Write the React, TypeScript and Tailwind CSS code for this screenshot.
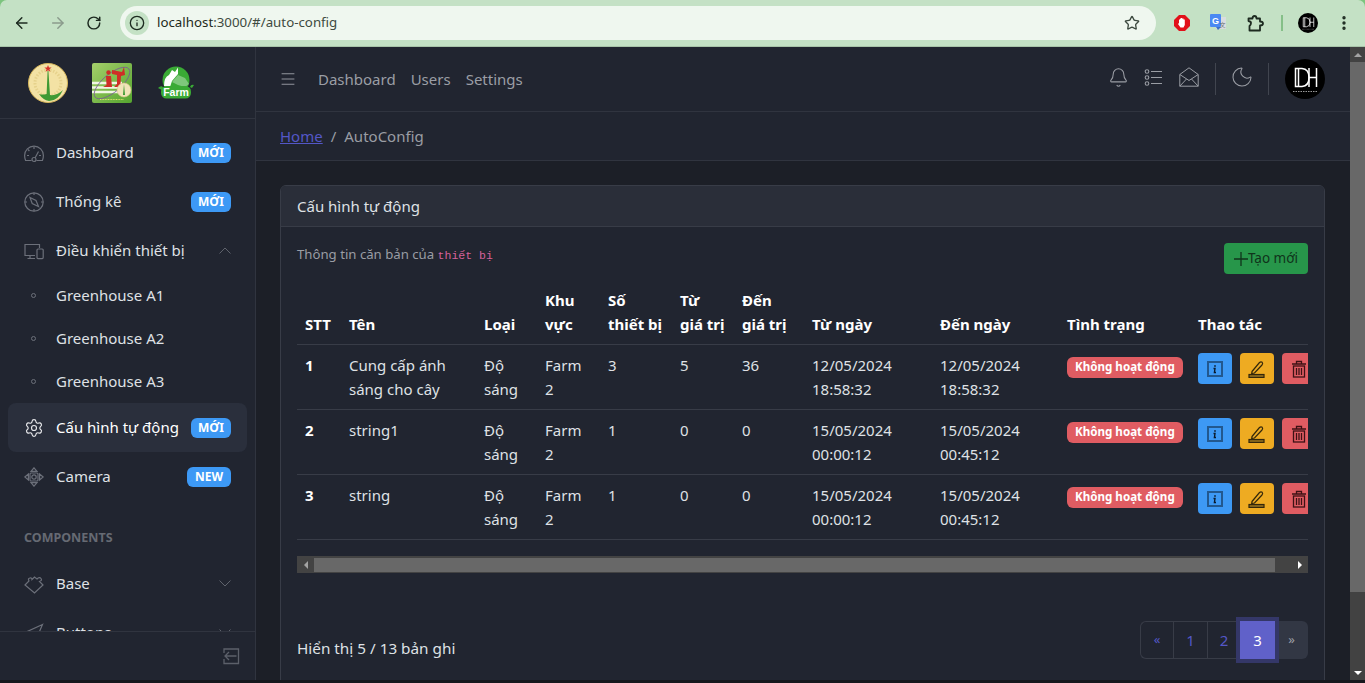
import { Bell, Menu, Moon, Settings, Info, ArrowLeft, ArrowRight, RotateCw, Star, MoreVertical } from 'lucide-react'

const rows = [
  { id: 1, name: ['Cung cấp ánh', 'sáng cho cây'], devices: 3, from: 5, to: 36, start: ['12/05/2024', '18:58:32'], end: ['12/05/2024', '18:58:32'] },
  { id: 2, name: ['string1'], devices: 1, from: 0, to: 0, start: ['15/05/2024', '00:00:12'], end: ['15/05/2024', '00:45:12'] },
  { id: 3, name: ['string'], devices: 1, from: 0, to: 0, start: ['15/05/2024', '00:00:12'], end: ['15/05/2024', '00:45:12'] },
]

const GaugeIcon = () => (
  <svg width="20" height="20" viewBox="0 0 20 20" fill="none" stroke="currentColor" strokeWidth="1.2">
    <path d="M7.5 17.5 H1.6 Q.6 15 .6 12.5 A9.4 9.4 0 0 1 19.4 12.5 Q19.4 15 18.4 17.5 H12.5" />
    <circle cx="10" cy="16.5" r="2" />
    <path d="M11 15 L14.5 8.5 M10 4 V6 M4 6.5 L5.4 8 M3 12.5 H5 M15 12.5 H17" />
  </svg>
)

const CompassIcon = () => (
  <svg width="20" height="20" viewBox="0 0 20 20" fill="none" stroke="currentColor" strokeWidth="1.2">
    <circle cx="10" cy="10" r="9.2" />
    <path d="M6 5.5 L12 8.5 L14.5 14.5 L8.2 11.5 Z M10 .8 V3 M10 17 V19.2 M.8 10 H3 M17 10 H19.2" />
  </svg>
)

const DevicesIcon = () => (
  <svg width="20" height="20" viewBox="0 0 20 20" fill="none" stroke="currentColor" strokeWidth="1.2">
    <path d="M11 14.5 H1 V3.5 H15.5 V7" />
    <path d="M6 14.5 V17.5 M3.5 17.5 H11" />
    <rect x="13" y="8" width="6.2" height="9.6" rx="1" />
  </svg>
)

const CameraControlIcon = () => (
  <svg width="20" height="20" viewBox="0 0 20 20" fill="none" stroke="currentColor" strokeWidth="1.2">
    <path d="M10 .8 L13 4.4 H7 Z M10 19.2 L13 15.6 H7 Z M.8 10 L4.4 7 V13 Z M19.2 10 L15.6 7 V13 Z" />
    <rect x="6" y="6" width="8" height="8" rx="1" />
    <circle cx="10" cy="10" r="2.2" />
  </svg>
)

const BaseIcon = () => (
  <svg width="20" height="20" viewBox="0 0 20 20" fill="none" stroke="currentColor" strokeWidth="1.2">
    <path d="M1 11 L5 7 Q3.5 4.5 6 4 Q8 3.6 8 5.5 L10.5 3 L13 5 Q15.5 2.5 17 4.5 Q18.5 6.5 15.5 7.5 L19 11 L10.5 19 Z" />
  </svg>
)

const CursorIcon = () => (
  <svg width="20" height="20" viewBox="0 0 20 20" fill="none" stroke="currentColor" strokeWidth="1.2">
    <path d="M18.5 1.5 L1 9.5 L9.5 11 L11 19 Z" />
  </svg>
)

const Chevron = ({ up }: { up?: boolean }) => (
  <svg className="ml-auto text-[#5f636c]" width="12" height="7" viewBox="0 0 12 7" fill="none" stroke="currentColor" strokeWidth="1">
    <path d={up ? 'M.5 6.5 L6 1 L11.5 6.5' : 'M.5 .5 L6 6 L11.5 .5'} />
  </svg>
)

function DhMark({ size }: { size: number }) {
  return (
    <svg width={size} height={size} viewBox="0 0 40 40">
      <circle cx="20" cy="20" r="20" fill="#000" />
      <g fill="none" stroke="#fff" strokeWidth="1.5">
        <path d="M10.5 9.5 H17 Q24 10 24 18.5 Q24 27 17 27.5 H10.5 Z M13.5 9.5 V27.5" />
        <path d="M24 18.5 H31.5 M31.5 9 V28 M24 9 V28" />
      </g>
      <path d="M8 32.5 H33" stroke="#999" strokeWidth="1" strokeDasharray="1.5 1" />
    </svg>
  )
}

function Badge({ text }: { text: string }) {
  return (
    <span className={`ml-auto bg-[#3d99f5] text-white text-[12px] font-bold rounded-md h-5 flex items-center justify-center ${text === 'NEW' ? 'w-11' : 'w-10'}`}>
      {text}
    </span>
  )
}

function NavItem({ icon, label, badge, chevron, active }: { icon: React.ReactNode; label: string; badge?: string; chevron?: 'up' | 'down'; active?: boolean }) {
  return (
    <div className={`h-[49px] mx-2 pl-4 pr-4 flex items-center rounded-lg ${active ? 'bg-[#2a2f3c] text-white' : 'text-[#dfe1e5]'}`}>
      <span className={`w-8 shrink-0 flex ${active ? 'text-[#e6e7ea]' : 'text-[#6c707a]'}`}>{icon}</span>
      <span className="text-[15px]">{label}</span>
      {badge && <Badge text={badge} />}
      {chevron === 'up' && <Chevron up />}
      {chevron === 'down' && <Chevron />}
    </div>
  )
}

function SubItem({ label }: { label: string }) {
  return (
    <div className="h-[43px] mx-2 pl-4 flex items-center text-[#dfe1e5]">
      <span className="w-8 flex pl-[7px]"><span className="w-[5px] h-[5px] rounded-full border border-[#6c707a]" /></span>
      <span className="text-[15px]">{label}</span>
    </div>
  )
}

function Logos() {
  return (
    <div className="h-[72px] shrink-0 border-b border-[#30343f] flex items-center pl-[28px]">
      {/* school seal */}
      <svg width="40" height="40" viewBox="0 0 40 40">
        <circle cx="20" cy="20" r="19.5" fill="#f3e2a4" stroke="#d9b85c" strokeWidth="1" />
        <circle cx="20" cy="20" r="13" fill="none" stroke="#e6d28c" strokeWidth="3" strokeDasharray="1.5 1.5" />
        <path d="M19.6 8 L18.6 31 Q14 32 11 31 Q15 37 21 38 Q30 38 35 27 Q29 33 22 32 L20.4 8 Z" fill="#3f9a34" />
        <path d="M20 2 L21 4.6 L23.6 4.6 L21.5 6.2 L22.3 8.8 L20 7.2 L17.7 8.8 L18.5 6.2 L16.4 4.6 L19 4.6 Z" fill="#d9352a" />
      </svg>
      {/* IT department logo */}
      <svg className="ml-[24px]" width="40" height="40" viewBox="0 0 40 40">
        <defs>
          <linearGradient id="itBg" x1="0" y1="0" x2="1" y2="1">
            <stop offset="0" stopColor="#a5cf6a" />
            <stop offset="1" stopColor="#55a52f" />
          </linearGradient>
        </defs>
        <rect width="40" height="40" rx="2" fill="url(#itBg)" />
        <path d="M0 20 H30 M0 24.5 H28 M0 29 H28" stroke="#f1f7e4" strokeWidth="2.5" />
        <ellipse cx="20" cy="20" rx="22" ry="9" transform="rotate(-40 20 20)" fill="none" stroke="#7a5a96" strokeWidth=".8" />
        <circle cx="16.5" cy="9.5" r="2.2" fill="#cf2d26" />
        <path d="M14 13 H19 L20 24 H11 L14.5 22 Z" fill="#cf2d26" />
        <path d="M20 7 L30 9 L32 4 L33 12 L29 13 L28.5 21 L32 24 H22 L25 21 L25 12 L20 11 Z" fill="#cf2d26" />
        <circle cx="32" cy="27" r="7" fill="#f1e4b8" stroke="#d8c68a" strokeWidth=".6" />
        <path d="M32 21 L31 32 L33 32 Z" fill="#3f9a34" />
        <path d="M8 36.5 H32" stroke="#d8e36a" strokeWidth="1" strokeDasharray="1 .6" />
      </svg>
      {/* farm logo */}
      <svg className="ml-[26px]" width="36" height="33" viewBox="0 0 36 33">
        <circle cx="18" cy="14" r="13.5" fill="#3aaa35" />
        <path d="M6 20 Q6 11 11 9 L14 4 L17 6 L20 1.5 L20 8 L14 15 L12 21 Z" fill="#fff" />
        <path d="M14 16 L20 9 L27 12 L31 18 L27 21 L20 19 Z" fill="#fff" opacity=".35" />
        <path d="M0 22 Q3 19 5 21 L4 24 Z M36 19 Q33 18 32 21 L34 22 Z" fill="#3aaa35" />
        <rect x="3" y="20" width="30" height="12.5" rx="5.5" fill="#3aaa35" />
        <text x="18" y="30" textAnchor="middle" fill="#fff" fontSize="10.5" fontWeight="700" fontFamily="Liberation Sans, sans-serif">Farm</text>
      </svg>
    </div>
  )
}

function Sidebar() {
  return (
    <aside className="w-[256px] shrink-0 border-r border-[#30343f] bg-[#212530] flex flex-col">
      <Logos />
      <nav className="flex-1 overflow-hidden pt-[9px]">
        <NavItem icon={<GaugeIcon />} label="Dashboard" badge="MỚI" />
        <NavItem icon={<CompassIcon />} label="Thống kê" badge="MỚI" />
        <NavItem icon={<DevicesIcon />} label="Điều khiển thiết bị" chevron="up" />
        <div className="-mt-px">
          <SubItem label="Greenhouse A1" />
          <SubItem label="Greenhouse A2" />
          <SubItem label="Greenhouse A3" />
        </div>
        <NavItem icon={<Settings className="w-5 h-5" strokeWidth={1.4} />} label="Cấu hình tự động" badge="MỚI" active />
        <NavItem icon={<CameraControlIcon />} label="Camera" badge="NEW" />
        <div className="pl-6 mt-[25px] mb-[9px] text-[12.5px] font-bold text-[#666a73] h-[24px] flex items-center">COMPONENTS</div>
        <NavItem icon={<BaseIcon />} label="Base" chevron="down" />
        <NavItem icon={<CursorIcon />} label="Buttons" chevron="down" />
      </nav>
      <div className="h-[49px] shrink-0 border-t border-[#30343f] flex items-center justify-end pr-[15px] bg-[#212530]">
        <svg width="18" height="18" viewBox="0 0 18 18" fill="none" stroke="#5c606a" strokeWidth="1.3">
          <path d="M2 6 V2 H16.5 V16.5 H2 V12" />
          <path d="M14.5 9 H3 M7 5 L3 9 L7 13" />
        </svg>
      </div>
    </aside>
  )
}

function Header() {
  return (
    <header className="h-[65px] shrink-0 border-b border-[#30343f] flex items-center pl-[23px] pr-[25px]">
      <Menu className="w-[18px] h-[18px] text-[#9a9da4] mr-[21px]" strokeWidth={1.25} />
      <div className="flex gap-[15px] text-[15px] text-[#9b9ea5]">
        <span>Dashboard</span>
        <span>Users</span>
        <span>Settings</span>
      </div>
      <div className="ml-auto flex items-center text-[#9a9da4]">
        <Bell className="w-[21px] h-[21px] -mt-1" strokeWidth={1.2} />
        <svg className="ml-[15px] -mt-1" width="19" height="19" viewBox="0 0 19 19" fill="none" stroke="currentColor" strokeWidth="1.1">
          <circle cx="3" cy="3.5" r="1.8" /><circle cx="3" cy="9.5" r="1.8" /><circle cx="3" cy="15.5" r="1.8" />
          <path d="M7 3.5 H18 M7 9.5 H18 M7 15.5 H18" />
        </svg>
        <svg className="ml-[16px] -mt-1" width="20" height="20" viewBox="0 0 20 20" fill="none" stroke="currentColor" strokeWidth="1">
          <path d="M.8 7.5 L10 .8 L19.2 7.5 V19.2 H.8 Z M.8 7.5 L10 13.5 L19.2 7.5 M.8 19.2 L7.5 12 M19.2 19.2 L12.5 12" />
        </svg>
        <span className="w-px h-8 bg-[#41454f] ml-4 mr-4" />
        <Moon className="w-6 h-6 -mx-0.5 -mt-1" strokeWidth={1.05} />
        <span className="w-px h-8 bg-[#41454f] ml-4 mr-4" />
        <DhMark size={40} />
      </div>
    </header>
  )
}

function Th({ children, className = '' }: { children: React.ReactNode; className?: string }) {
  return <th className={`px-2 pb-2 pt-0 align-bottom text-left font-bold text-[15px] leading-[24px] text-white ${className}`}>{children}</th>
}

function Td({ children, className = '' }: { children: React.ReactNode; className?: string }) {
  return <td className={`px-2 py-2 align-top text-[15px] leading-[24px] text-[#dfe1e5] ${className}`}>{children}</td>
}

function Stack({ lines }: { lines: string[] }) {
  return <>{lines.map((line) => <div key={line}>{line}</div>)}</>
}

function RowActions() {
  return (
    <div className="flex gap-2">
      <span className="w-[34px] h-[31px] shrink-0 rounded bg-[#3d99f5] flex items-center justify-center">
        <svg width="16" height="16" viewBox="0 0 16 16" fill="none">
          <rect x="1" y="1" width="14" height="14" stroke="#22588f" strokeWidth="2" />
          <path d="M7.2 5 H8.8 M6.5 7.5 H8 L7.4 11.5 H9" stroke="#0b1a2b" strokeWidth="1.4" />
        </svg>
      </span>
      <span className="w-[34px] h-[31px] shrink-0 rounded bg-[#eeab22] flex items-center justify-center">
        <svg width="18" height="18" viewBox="0 0 18 18" fill="none" stroke="#33270b" strokeWidth="1.2">
          <path d="M4 11.5 L11.5 2.5 Q13 1.2 14.2 2.3 Q15.2 3.5 14 5 L6.5 13 L3.7 13.5 Z" />
          <rect x="1" y="14.5" width="15" height="3" fill="#8a6a1c" />
        </svg>
      </span>
      <span className="w-[34px] h-[31px] shrink-0 rounded bg-[#e05c62] flex items-center justify-center">
        <svg width="18" height="18" viewBox="0 0 18 18" fill="none" stroke="#3d1114" strokeWidth="1.3">
          <path d="M2 4 H16 M6.5 4 V1.5 H11.5 V4" />
          <rect x="3.5" y="6" width="11" height="11" />
          <path d="M6.5 8 V15 M9 8 V15 M11.5 8 V15" />
        </svg>
      </span>
    </div>
  )
}

function Table() {
  return (
    <div className="overflow-hidden">
      <table className="w-[1013px] border-collapse table-fixed">
        <colgroup>
          <col className="w-[44px]" /><col className="w-[135px]" /><col className="w-[61px]" /><col className="w-[63px]" />
          <col className="w-[72px]" /><col className="w-[62px]" /><col className="w-[70px]" /><col className="w-[128px]" />
          <col className="w-[127px]" /><col className="w-[131px]" /><col className="w-[120px]" />
        </colgroup>
        <thead>
          <tr className="border-b border-[#383c47]">
            <Th>STT</Th><Th>Tên</Th><Th>Loại</Th><Th>Khu vực</Th><Th>Số thiết bị</Th><Th>Từ giá trị</Th><Th>Đến giá trị</Th>
            <Th>Từ ngày</Th><Th>Đến ngày</Th><Th>Tình trạng</Th><Th>Thao tác</Th>
          </tr>
        </thead>
        <tbody>
          {rows.map((row) => (
            <tr key={row.id} className="border-b border-[#383c47]">
              <Td className="font-bold text-white">{row.id}</Td>
              <Td><Stack lines={row.name} /></Td>
              <Td>Độ sáng</Td>
              <Td>Farm 2</Td>
              <Td>{row.devices}</Td>
              <Td>{row.from}</Td>
              <Td>{row.to}</Td>
              <Td><Stack lines={row.start} /></Td>
              <Td><Stack lines={row.end} /></Td>
              <Td>
                <span className="inline-flex items-center h-[21px] px-2 rounded-md bg-[#e05c62] text-white text-[11.6px] font-bold whitespace-nowrap">Không hoạt động</span>
              </Td>
              <Td><RowActions /></Td>
            </tr>
          ))}
        </tbody>
      </table>
    </div>
  )
}

function Pagination() {
  return (
    <div className="flex items-center h-[38px] text-[15px]">
      <span className="w-[33px] h-full flex items-center justify-center border border-r-0 border-[#383c47] rounded-l-md text-[#5457c7] text-[13px]">«</span>
      <span className="w-[34px] h-full flex items-center justify-center border border-r-0 border-[#383c47] text-[#5457c7]">1</span>
      <span className="w-[33px] h-full flex items-center justify-center border-y border-l border-[#383c47] text-[#5457c7]">2</span>
      <span className="w-[35px] h-full flex items-center justify-center bg-[#6061c9] text-white outline-4 outline-[#343768] z-10">3</span>
      <span className="w-[33px] h-full flex items-center justify-center bg-[#323744] rounded-r-md text-[#9a9da4] text-[13px]">»</span>
    </div>
  )
}

function Card() {
  return (
    <div className="border border-[#383c47] rounded-md bg-[#212530] overflow-hidden">
      <div className="h-[41px] bg-[#2a2e39] border-b border-[#383c47] px-4 flex items-center text-[15px] text-[#dfe1e5]">Cấu hình tự động</div>
      <div className="px-4 pt-4">
        <div className="flex items-start justify-between h-[31px]">
          <p className="text-[13.2px] text-[#9a9da4] mt-[2px]">Thông tin căn bản của <code className="text-[11.5px] text-[#d6619a] font-['Liberation_Mono',monospace]">thiết bị</code></p>
          <button className="h-[31px] px-[10px] rounded bg-[#27964a] text-[#10331b] text-[13.5px] flex items-center">
            <svg width="14" height="14" viewBox="0 0 14 14" stroke="currentColor" strokeWidth="1.3"><path d="M7 0 V14 M0 7 H14" /></svg>
            Tạo mới
          </button>
        </div>
        <div className="mt-[14px]"><Table /></div>
        <div className="mt-4 h-[17px] bg-[#434343] flex items-center">
          <span className="w-[17px] flex justify-center"><span className="border-y-4 border-r-4 border-y-transparent border-r-[#a3a3a3]" /></span>
          <span className="flex-1 h-[14px] bg-[#686868]" />
          <span className="w-4" />
          <span className="w-[17px] flex justify-center"><span className="border-y-4 border-l-4 border-y-transparent border-l-white" /></span>
        </div>
        <div className="flex items-end justify-between mt-[48px] pb-8">
          <span className="text-[15.3px] text-[#dfe1e5] -mb-px">Hiển thị 5 / 13 bản ghi</span>
          <Pagination />
        </div>
      </div>
    </div>
  )
}

function BrowserBar() {
  return (
    <div className="shrink-0 bg-[#7cc47e]">
      <div className="h-[47px] bg-[#c4e1c5] flex items-center pl-[13px] pr-[12px] border-b border-[#a8c4a9] rounded-t-[7px]">
        <ArrowLeft className="w-[18px] h-[18px] text-[#1d2a20]" strokeWidth={2} />
        <ArrowRight className="w-[18px] h-[18px] text-[#8a9a8c] ml-[18px]" strokeWidth={2} />
        <RotateCw className="w-4 h-4 text-[#1d2a20] ml-5" strokeWidth={2.25} />
        <div className="ml-[18px] w-[1036px] h-[34px] rounded-full bg-[#eff7ef] flex items-center pl-[5px] pr-4 shrink-0">
          <span className="w-6 h-6 rounded-full bg-[#c4e1c5] flex items-center justify-center"><Info className="w-4 h-4 text-[#1d2a20]" strokeWidth={2} /></span>
          <span className="ml-[8px] text-[13.3px] text-[#3d4a40]"><span className="text-[#1d2a20]">localhost</span>:3000/#/auto-config</span>
          <Star className="ml-auto w-4 h-4 text-[#3d4a40]" strokeWidth={2} />
        </div>
        {/* stop-hand extension */}
        <svg className="ml-[18px] shrink-0" width="16" height="16" viewBox="0 0 16 16">
          <path d="M5 0 H11 L16 5 V11 L11 16 H5 L0 11 V5 Z" fill="#e2101a" />
          <path d="M5 8 V4.5 H6 V3.5 H7 V3 H8 V3.5 H9.5 V4.5 H10.8 V10 L9.5 12.5 H6.5 L4 9 Z" fill="#fff" />
        </svg>
        {/* translate extension */}
        <svg className="ml-[20px] shrink-0" width="16" height="18" viewBox="0 0 16 18">
          <rect x="6" y="3" width="10" height="12" fill="#d9dde0" />
          <rect width="11" height="13" rx="1" fill="#4a89f3" />
          <path d="M6 13 L8 16 L11 13 Z" fill="#3a6fc9" />
          <text x="5.5" y="10" textAnchor="middle" fill="#fff" fontSize="9" fontWeight="700" fontFamily="Liberation Sans, sans-serif">G</text>
          <text x="12.5" y="13" textAnchor="middle" fill="#6a6f74" fontSize="6" fontFamily="Noto Sans CJK SC, sans-serif">文</text>
        </svg>
        <svg className="ml-[21px] shrink-0" width="17" height="17" viewBox="0 0 17 17" fill="none" stroke="#1d2a20" strokeWidth="1.8" strokeLinejoin="round">
          <path d="M1.5 3.5 H5.5 Q5.5 1 7.5 1 Q9.5 1 9.5 3.5 H13 V6.5 Q16 6.5 16 8.5 Q16 10.5 13 10.5 V15.5 H2.5 V11 Q4 10 4 8 Q4 6.5 1.5 6 Z" />
        </svg>
        <span className="ml-[17px] w-0.5 h-4 shrink-0 bg-[#85bf88]" />
        <span className="ml-[15px] shrink-0 flex"><DhMark size={20} /></span>
        <MoreVertical className="ml-[17px] w-[18px] h-[18px] shrink-0 text-[#1d2a20]" strokeWidth={2.5} />
      </div>
    </div>
  )
}

export default function App() {
  return (
    <div className="h-[683px] w-[1365px] overflow-hidden flex flex-col bg-[#1c1f27] font-['Noto_Sans',sans-serif]">
      <BrowserBar />
      <div className="flex-1 min-h-0 flex">
        <Sidebar />
        <div className="flex-1 min-w-0 flex flex-col bg-[#1c1f27] overflow-hidden">
          <div className="bg-[#212530]">
            <Header />
            <div className="h-[49px] border-b border-[#30343f] pl-6 flex items-center text-[15px] text-[#9a9da4]">
              <span className="text-[#5457c7] underline">Home</span>
              <span className="mx-2">/</span>
              <span>AutoConfig</span>
            </div>
          </div>
          <div className="pl-6 pr-[25px] pt-6"><Card /></div>
        </div>
        <div className="w-[15px] shrink-0 bg-[#424242] flex flex-col items-center">
          <span className="h-[15px] flex items-center"><span className="border-x-4 border-b-4 border-x-transparent border-b-[#a3a3a3]" /></span>
          <span className="w-full h-[530px] shrink-0 bg-[#686868]" />
          <span className="mt-auto h-[15px] flex items-center"><span className="border-x-4 border-t-4 border-x-transparent border-t-white" /></span>
        </div>
      </div>
      <div className="h-[3px] shrink-0 bg-[#16181d]" />
    </div>
  )
}
